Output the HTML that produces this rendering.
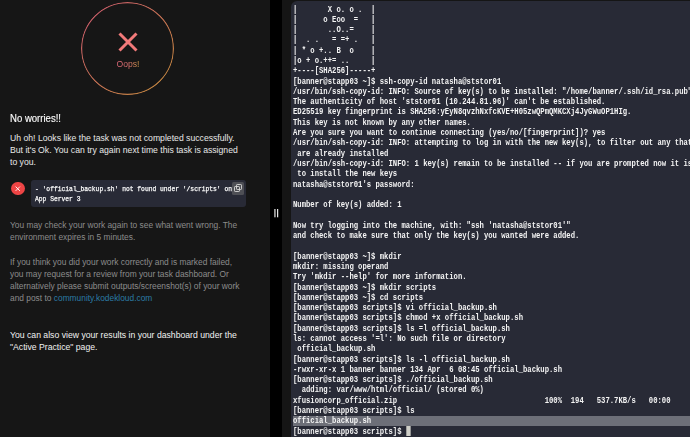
<!DOCTYPE html>
<html><head><meta charset="utf-8">
<style>
html,body{margin:0;padding:0;}
body{width:690px;height:437px;overflow:hidden;background:#151515;position:relative;font-family:"Liberation Sans",sans-serif;}
#left{position:absolute;left:0;top:0;width:270px;height:437px;background:#161616;}
#blk{position:absolute;left:270px;top:0;width:12px;height:437px;background:#000;}
#gap{position:absolute;left:282px;top:0;width:9px;height:437px;background:#151515;}
#term{position:absolute;left:291px;top:1px;width:420px;height:460px;background:#282a36;border-radius:6px;}
#pre{position:absolute;left:293px;top:4.5px;margin:0;font-family:"Liberation Mono",monospace;font-size:8.3px;line-height:10.29px;color:#f4f4f4;font-weight:bold;white-space:pre;transform:scaleX(0.8715);transform-origin:0 0;}
.sel{background:#6d6f78;display:inline-block;width:480px;height:10.35px;vertical-align:top;position:relative;top:-0.5px;}
.cur{display:inline-block;width:4.6px;height:10.29px;margin-left:1px;background:#cfcfc8;vertical-align:top;position:relative;top:-0.6px;}
.circle{position:absolute;left:81.3px;top:1.6px;width:93px;height:93px;border-radius:50%;box-sizing:border-box;}
.oops{position:absolute;left:116.5px;top:59.2px;font-size:8.6px;color:#d86a6a;background:linear-gradient(90deg,#e26a7a 0%,#dc7270 55%,#d29a48 100%);-webkit-background-clip:text;background-clip:text;-webkit-text-fill-color:transparent;}
.t{position:absolute;left:10px;white-space:nowrap;}
.h{font-size:10.7px;color:#fafafa;top:112.2px;font-weight:normal;-webkit-text-stroke:0.15px #fafafa;transform:scaleX(0.895);transform-origin:0 0;}
.p1{font-size:8.67px;color:#e8e8e8;line-height:12.1px;}
.p2{font-size:8.38px;color:#8c8c8c;line-height:12.2px;}
.p3{font-size:8.67px;color:#f2f2f2;line-height:11.5px;}
a{color:#2b7ba5;text-decoration:none;}
#err{position:absolute;left:31px;top:180px;width:215px;height:27px;background:#282a36;border-radius:3px;}
#errtxt{position:absolute;left:34.7px;top:184.2px;font-family:"Liberation Mono",monospace;font-size:7px;line-height:10.1px;color:#fafafa;white-space:pre;-webkit-text-stroke:0.25px #fafafa;transform:scaleX(0.902);transform-origin:0 0;}
#redc{position:absolute;left:11.1px;top:181.5px;width:13.5px;height:13.5px;border-radius:50%;background:#ee4545;}
#copy{position:absolute;left:232px;top:182.3px;width:12px;height:12.3px;background:#4e4f55;border-radius:1.5px;}
#divider{position:absolute;left:274px;top:208.8px;}
</style></head><body>
<div id="left"></div>
<div id="blk"></div>
<div id="gap"></div>
<div id="term"></div>

<svg class="circle" width="93" height="93" viewBox="0 0 93 93">
<defs><linearGradient id="g" x1="0" y1="0" x2="1" y2="1"><stop offset="0" stop-color="#c8566e"/><stop offset="1" stop-color="#c08a3a"/></linearGradient></defs>
<circle cx="46.5" cy="46.5" r="45.9" fill="none" stroke="url(#g)" stroke-width="1.2"/>
</svg>
<svg style="position:absolute;left:118px;top:32px" width="20" height="20" viewBox="0 0 20 20">
<path d="M1.5 1.5 L18.5 18.5 M18.5 1.5 L1.5 18.5" stroke="#f27a7a" stroke-width="3" fill="none"/>
</svg>
<div class="oops">Oops!</div>

<div class="t h">No worries!!</div>
<div class="t p1" style="top:131.8px">Uh oh! Looks like the task was not completed successfully.<br>But it's Ok. You can try again next time this task is assigned<br>to you.</div>

<div id="redc"><svg width="13.5" height="13.5" viewBox="0 0 13.5 13.5" style="position:absolute;left:0;top:0"><path d="M4.6 4.6 L8.9 8.9 M8.9 4.6 L4.6 8.9" stroke="#fff" stroke-width="0.9"/></svg></div>
<div id="err"></div>
<div id="errtxt">- 'official_backup.sh' not found under '/scripts' on
App Server 3</div>
<div id="copy"><svg width="12" height="12" viewBox="0 0 12 12" style="position:absolute;left:0;top:0"><rect x="4.5" y="2.5" width="5" height="5" rx="0.7" fill="none" stroke="#d8d8d8" stroke-width="0.9"/><rect x="2.5" y="4.5" width="5" height="5" rx="0.7" fill="none" stroke="#d8d8d8" stroke-width="0.9"/></svg></div>

<div class="t p2" style="top:218.7px">You may check your work again to see what went wrong. The<br>environment expires in 5 minutes.</div>
<div class="t p2" style="top:255.7px">If you think you did your work correctly and is marked failed,<br>you may request for a review from your task dashboard. Or<br>alternatively please submit outputs/screenshot(s) of your work<br>and post to <a>community.kodekloud.com</a></div>
<div class="t p3" style="top:330.3px">You can also view your results in your dashboard under the<br>"Active Practice" page.</div>

<div id="divider"><svg width="6" height="9" style="display:block"><rect x="0.4" y="0" width="1.1" height="8.3" fill="#fff"/><rect x="3.1" y="0" width="1.1" height="8.3" fill="#fff"/></svg></div>

<pre id="pre">|       X o. o .  |
|      o Eoo  =   |
|       ..O..=    |
|  . .   = =+ .   |
| * o +.. B  o    |
|o + o.++= ..     |
+----[SHA256]-----+
[banner@stapp03 ~]$ ssh-copy-id natasha@ststor01
/usr/bin/ssh-copy-id: INFO: Source of key(s) to be installed: "/home/banner/.ssh/id_rsa.pub"
The authenticity of host 'ststor01 (10.244.81.96)' can't be established.
ED25519 key fingerprint is SHA256:yEyN8qvzhNxfcKVE+H05zwQPmQMKCXj4JyGWuOP1HIg.
This key is not known by any other names.
Are you sure you want to continue connecting (yes/no/[fingerprint])? yes
/usr/bin/ssh-copy-id: INFO: attempting to log in with the new key(s), to filter out any that
 are already installed
/usr/bin/ssh-copy-id: INFO: 1 key(s) remain to be installed -- if you are prompted now it is
 to install the new keys
natasha@ststor01's password: 

Number of key(s) added: 1

Now try logging into the machine, with: "ssh 'natasha@ststor01'"
and check to make sure that only the key(s) you wanted were added.

[banner@stapp03 ~]$ mkdir
mkdir: missing operand
Try 'mkdir --help' for more information.
[banner@stapp03 ~]$ mkdir scripts
[banner@stapp03 ~]$ cd scripts
[banner@stapp03 scripts]$ vi official_backup.sh
[banner@stapp03 scripts]$ chmod +x official_backup.sh
[banner@stapp03 scripts]$ ls =l official_backup.sh
ls: cannot access '=l': No such file or directory
 official_backup.sh
[banner@stapp03 scripts]$ ls -l official_backup.sh
-rwxr-xr-x 1 banner banner 134 Apr  6 08:45 official_backup.sh
[banner@stapp03 scripts]$ ./official_backup.sh
  adding: var/www/html/official/ (stored 0%)
xfusioncorp_official.zip                                  100%  194   537.7KB/s   00:00
[banner@stapp03 scripts]$ ls
<span class="sel">official_backup.sh</span>
[banner@stapp03 scripts]$ <span class="cur"></span></pre>
</body></html>
